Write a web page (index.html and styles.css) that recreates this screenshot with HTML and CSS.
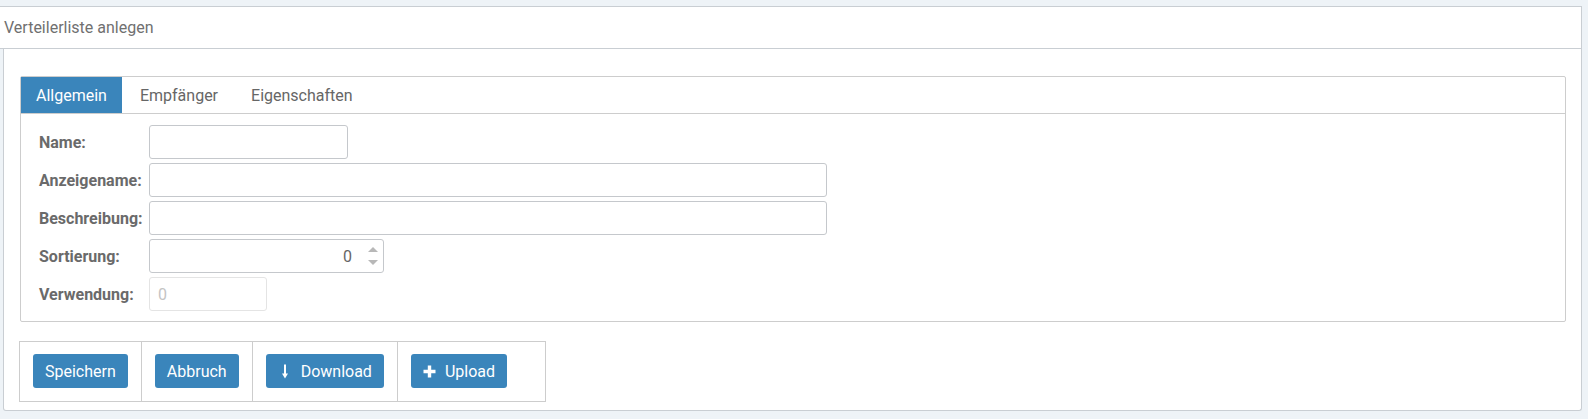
FILE: index.html
```html
<!DOCTYPE html>
<html lang="de">
<head>
  <meta charset="UTF-8" />
  <title>Verteilerliste anlegen</title>
  <link rel="stylesheet" href="styles.css">
</head>
<body>
  <div class="panel">
    <div class="panel-head">Verteilerliste anlegen</div>
    <div class="panel-body">

      <!-- Tabs -->
      <div class="tab-box">
        <ul class="tabs">
          <li class="tab active">Allgemein</li>
          <li class="tab">Empfänger</li>
          <li class="tab">Eigenschaften</li>
        </ul>
        <div class="tab-content">
          <div class="row">
            <label class="lbl">Name:</label>
            <input class="field field-sm" type="text" value="">
          </div>
          <div class="row">
            <label class="lbl">Anzeigename:</label>
            <input class="field field-lg" type="text" value="">
          </div>
          <div class="row">
            <label class="lbl">Beschreibung:</label>
            <input class="field field-lg" type="text" value="">
          </div>
          <div class="row">
            <label class="lbl">Sortierung:</label>
            <div class="field field-num">
              <input class="num-input" type="text" value="0">
              <span class="spinner">
                <span class="arrow-up"></span>
                <span class="arrow-down"></span>
              </span>
            </div>
          </div>
          <div class="row">
            <label class="lbl">Verwendung:</label>
            <input class="field field-xs" type="text" value="0" disabled>
          </div>
        </div>
      </div>

      <!-- Buttons -->
      <div class="btn-box">
        <div class="btn-cell"><button class="btn">Speichern</button></div>
        <div class="btn-cell"><button class="btn">Abbruch</button></div>
        <div class="btn-cell">
          <button class="btn">
            <svg class="ico" width="14" height="15" viewBox="0 0 14 15">
              <path d="M7 0.5 V11" stroke="#fff" stroke-width="2" fill="none"/>
              <path d="M4 9.5 L7 14.5 L10 9.5 Z" fill="#fff"/>
            </svg>Download
          </button>
        </div>
        <div class="btn-cell last">
          <button class="btn">
            <svg class="ico" width="13" height="13" viewBox="0 0 13 13">
              <path d="M6.5 0.5 V12.5 M0.5 6.5 H12.5" stroke="#fff" stroke-width="3.4" fill="none"/>
            </svg>Upload
          </button>
        </div>
      </div>

    </div>
  </div>
</body>
</html>
```

FILE: styles.css
```css
/* Reset & basic styling */
* {
  box-sizing: border-box;
  margin: 0;
  padding: 0;
}
body {
  font-family: 'Roboto', 'Liberation Sans', sans-serif;
  font-size: 16px;
  color: #666;
  background: #eef3f7;
  padding: 6px 6px 0 3px;
  height: 100vh;
}

/* Outer panel */
.panel {
  background: #fff;
  border: 1px solid #c9ced3;
  border-top: none;
  border-radius: 0 0 3px 3px;
}
.panel-head {
  height: 43px;
  margin: 0 -1px 0 -4px;
  padding-left: 4px;
  display: flex;
  align-items: center;
  background: #fff;
  border-top: 1px solid #c9ced3;
  border-bottom: 1px solid #c9ced3;
  border-right: 1px solid #c9ced3;
  color: #707070;
}
.panel-body {
  padding: 27px 15px 8px 16px;
}

/* Tabs */
.tab-box {
  border: 1px solid #cdcdcd;
  border-radius: 2px;
}
.tabs {
  list-style: none;
  display: flex;
  height: 37px;
  border-bottom: 1px solid #cdcdcd;
}
.tab {
  height: 36px;
  padding: 0 15px;
  margin-right: 3px;
  display: flex;
  align-items: center;
  color: #666;
}
.tab.active {
  background: #3a85bb;
  color: #fff;
}
.tab-content {
  padding: 11px 18px 10px 18px;
  display: flex;
  flex-direction: column;
  gap: 4px;
}
.row {
  display: flex;
  align-items: center;
  height: 34px;
}
.lbl {
  width: 110px;
  font-weight: bold;
  color: #6a6a6a;
}

/* Inputs */
.field {
  height: 34px;
  border: 1px solid #c5c8cc;
  border-radius: 3px;
  background: #fff;
  font-family: inherit;
  font-size: 16px;
  color: #666;
  padding: 0 8px;
}
.field-sm { width: 199px; }
.field-lg { width: 678px; }
.field-xs {
  width: 118px;
  border-color: #e4e4e4;
  color: #c4c4c4;
}
.field-num {
  width: 235px;
  display: flex;
  align-items: center;
  padding: 0 5px 0 8px;
}
.num-input {
  flex: 1;
  min-width: 0;
  border: none;
  outline: none;
  font-family: inherit;
  font-size: 16px;
  color: #666;
  text-align: right;
  padding-right: 15px;
}
.spinner {
  width: 11px;
  display: flex;
  flex-direction: column;
  align-items: center;
  gap: 8px;
}
.arrow-up,
.arrow-down {
  width: 0;
  height: 0;
  border-left: 5px solid transparent;
  border-right: 5px solid transparent;
}
.arrow-up { border-bottom: 5px solid #b8b8b8; }
.arrow-down { border-top: 5px solid #b8b8b8; }

/* Button bar */
.btn-box {
  display: inline-flex;
  margin: 19px 0 0 -1px;
  border: 1px solid #cdcdcd;
}
.btn-cell {
  padding: 12px 13px 13px 13px;
  border-right: 1px solid #cdcdcd;
}
.btn-cell.last {
  border-right: none;
  padding-right: 38px;
}
.btn {
  height: 34px;
  padding: 0 12px;
  display: flex;
  align-items: center;
  border: none;
  border-radius: 3px;
  background: #3a85bb;
  color: #fff;
  font-family: inherit;
  font-size: 16px;
  cursor: pointer;
}
.btn:hover {
  background: #326f9c;
}
.ico {
  margin-right: 9px;
}
```
